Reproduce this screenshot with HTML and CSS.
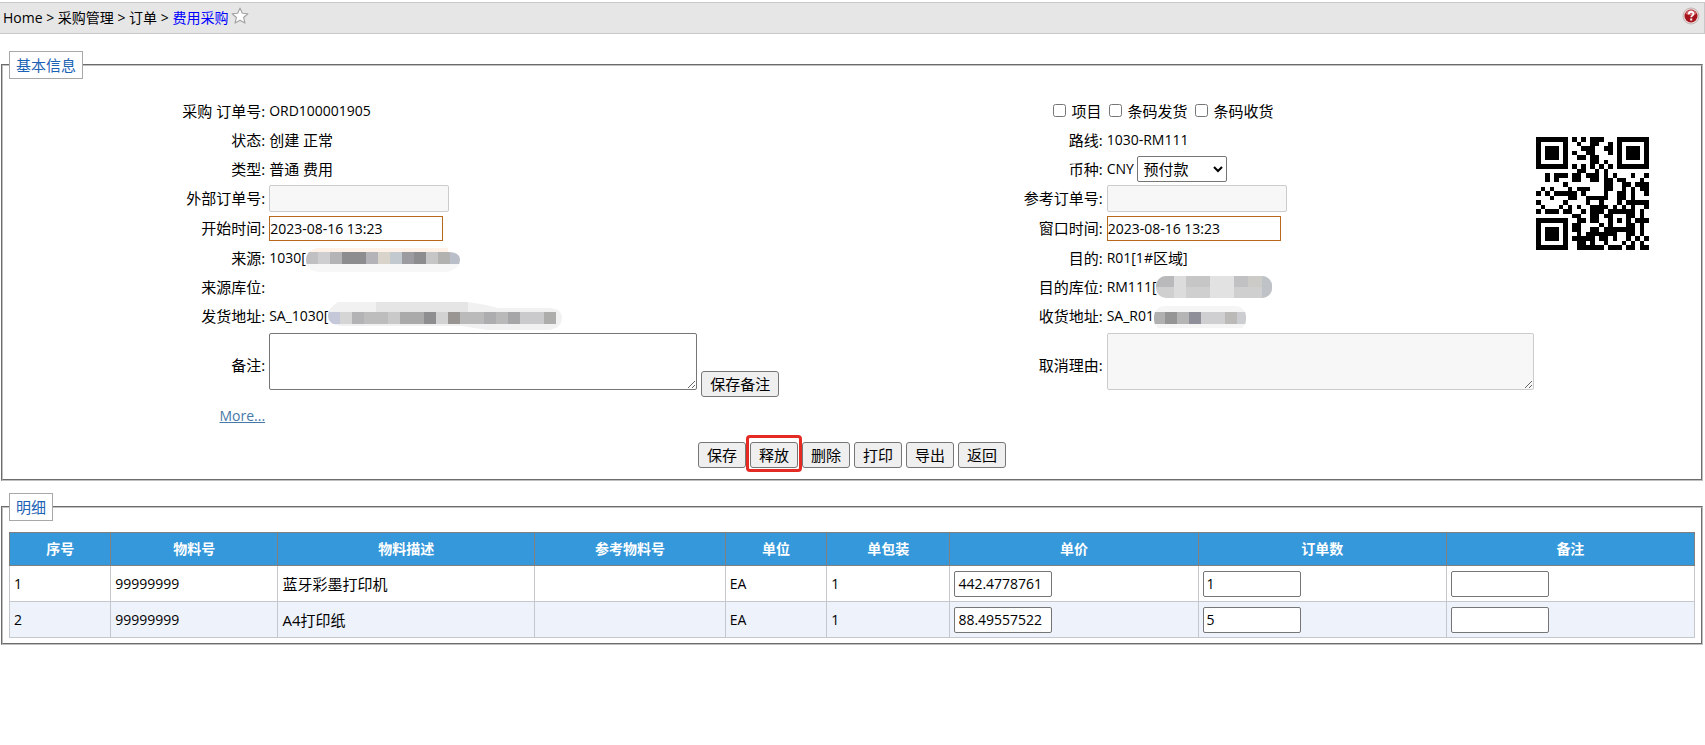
FILE: index.html
```html
<!DOCTYPE html>
<html lang="zh-CN">
<head>
<meta charset="utf-8">
<title>费用采购</title>
<link rel="stylesheet" href="styles.css">
</head>
<body>
<header class="topbar">
  <nav class="crumbs">Home &gt; 采购管理 &gt; 订单 &gt; <a class="crumb-current" href="#">费用采购</a></nav>
  <svg class="star" viewBox="0 0 16 16" aria-hidden="true"><path d="M8 1l2 4.600 5 .400-3.800 3.300 1.200 5L8 11.700 3.600 14.300l1.200-5L1 6l5-.4z" fill="#fff" stroke="#a2a2a2" stroke-linejoin="round"/></svg>
  <svg class="help" viewBox="0 0 18 18" aria-hidden="true"><circle cx="9" cy="9" r="8" fill="#e9dada" stroke="#c5b5b5"/><circle cx="9" cy="9" r="6.500" fill="#a5141c"/><path d="M3.500 7a5.800 5.800 0 0 1 11 0q-5 2.500-11 0z" fill="#d0666a"/><path d="M6.700 7.200c0-3.200 4.800-3.200 4.800-.4 0 1.800-2.300 1.800-2.300 3.500" fill="none" stroke="#fff" stroke-width="1.800"/><rect x="8.200" y="11.500" width="2" height="2" fill="#fff"/></svg>
</header>

<main>
<fieldset class="panel">
  <legend>基本信息</legend>
  <form class="form" id="order">
    <span class="label">采购 订单号:</span><div class="value">ORD100001905</div>
    <div class="checks">
      <label><input type="checkbox">项目</label>
      <label><input type="checkbox">条码发货</label>
      <label><input type="checkbox">条码收货</label>
    </div>

    <span class="label">状态:</span><div class="value cjk">创建 正常</div>
    <span class="label">路线:</span><div class="value">1030-RM111</div>

    <span class="label">类型:</span><div class="value cjk">普通 费用</div>
    <label class="label" for="pay">币种:</label><div class="value">CNY <select id="pay"><option>预付款</option></select></div>

    <label class="label" for="ext">外部订单号:</label><div class="value tall"><input class="field" id="ext" disabled></div>
    <label class="label" for="ref">参考订单号:</label><div class="value tall"><input class="field" id="ref" disabled></div>

    <label class="label" for="start">开始时间:</label><div class="value tall"><input class="date" id="start" value="2023-08-16 13:23"></div>
    <label class="label" for="window">窗口时间:</label><div class="value tall"><input class="date" id="window" value="2023-08-16 13:23"></div>

    <span class="label">来源:</span>
    <div class="value"><span>1030[</span><svg class="mask" width="154" height="28" viewBox="0 -4 154 28"><defs><clipPath id="c1"><path d="M12 0H142V4Q154 4 154 12T142 24H12Q0 22 0 12T12 0z"/></clipPath></defs><g clip-path="url(#c1)"><path d="M0 0h154v4H0z" fill="#fdf1e8"/><path d="M0 16h154v12H0z" fill="#f7f7f8"/><path d="M0 4h12v12H0z" fill="#c0c0c2"/><path d="M12 4h12v12H12z" fill="#ceced0"/><path d="M24 4h12v12H24z" fill="#b4b4b6"/><path d="M36 4h24v12H36z" fill="#8d8d90"/><path d="M60 4h12v12H60z" fill="#b4b4b8"/><path d="M72 4h12v12H72z" fill="#d8d4cb"/><path d="M84 4h12v12H84z" fill="#c3cacf"/><path d="M96 4h12v12H96z" fill="#9c9ca0"/><path d="M108 4h12v12h-12z" fill="#8d8d90"/><path d="M120 4h12v12h-12z" fill="#c6c6c6"/><path d="M132 4h12v12h-12z" fill="#b2b2b0"/><path d="M144 4h10v12h-10z" fill="#b9bec8"/></g></svg></div>
    <span class="label">目的:</span><div class="value">R01[1#<span class="cjk">区域</span>]</div>

    <span class="label">来源库位:</span><div class="value"></div>
    <span class="label">目的库位:</span>
    <div class="value"><span>RM111[</span><svg class="mask" width="116" height="24" viewBox="0 0 116 24"><defs><clipPath id="c2"><rect y="1" width="116" height="22" rx="10"/></clipPath></defs><g clip-path="url(#c2)"><path d="M0 0h116v24H0z" fill="#cfcfcf"/><path d="M0 0h18v12H0z" fill="#b9b9bb"/><path d="M18 0h12v24H18z" fill="#dcdcdc"/><path d="M30 0h24v12H30z" fill="#c6c6c6"/><path d="M54 0h24v24H54z" fill="#e2e2e2"/><path d="M78 0h14v12H78z" fill="#c1c1c3"/><path d="M92 0h14v12H92z" fill="#cdcbc8"/><path d="M106 0h10v24h-10z" fill="#bfc2c7"/></g></svg></div>

    <span class="label">发货地址:</span>
    <div class="value"><span>SA_1030[</span><svg class="mask" width="234" height="28" viewBox="0 0 234 28"><defs><clipPath id="c3"><path d="M10 0H140Q155 2 170 6H220Q234 6 234 16T220 28H160Q145 26 135 24H12Q0 22 0 14T10 0z"/></clipPath></defs><g clip-path="url(#c3)"><path d="M0 0h234v28H0z" fill="#f1f1f2"/><path d="M48 0h92v10H48z" fill="#e5e5e6"/><path d="M0 10h12v12H0z" fill="#c5c8d8"/><path d="M12 10h12v12H12z" fill="#d5d5d5"/><path d="M24 10h12v12H24z" fill="#b3b3b5"/><path d="M36 10h24v12H36z" fill="#bdbdbd"/><path d="M60 10h12v12H60z" fill="#c9c9c9"/><path d="M72 10h24v12H72z" fill="#aaa"/><path d="M96 10h12v12H96z" fill="#8e8e90"/><path d="M108 10h12v12h-12z" fill="#d2d2d2"/><path d="M120 10h12v12h-12z" fill="#999592"/><path d="M132 10h24v12h-24z" fill="#bababa"/><path d="M156 10h12v12h-12z" fill="#adadaf"/><path d="M168 10h12v12h-12z" fill="#b9b9b9"/><path d="M180 10h12v12h-12z" fill="#a6a6a8"/><path d="M192 10h24v12h-24z" fill="#cacacc"/><path d="M216 10h12v12h-12z" fill="#adadab"/></g></svg></div>
    <span class="label">收货地址:</span>
    <div class="value"><span>SA_R01</span><svg class="mask" width="92" height="24" viewBox="0 -2 92 24"><defs><clipPath id="c4"><rect width="92" height="24" rx="10"/></clipPath></defs><g clip-path="url(#c4)"><path d="M0 0h92v24H0z" fill="#f5f5f6"/><path d="M0 6h11v12H0z" fill="#b0b0b0"/><path d="M11 6h12v12H11z" fill="#959595"/><path d="M23 6h12v12H23z" fill="#b5b5b5"/><path d="M35 6h12v12H35z" fill="#8f8f99"/><path d="M47 6h24v12H47z" fill="#cfcfd2"/><path d="M71 6h12v12H71z" fill="#bcbab8"/><path d="M83 6h9v12h-9z" fill="#cbcdd0"/></g></svg></div>

    <label class="label" for="note">备注:</label><div class="value memo"><textarea id="note"></textarea><button class="btn" type="button">保存备注</button></div>
    <label class="label" for="reason">取消理由:</label><div class="value memo"><textarea id="reason" disabled></textarea></div>

    <span class="label more-row"><a class="more" href="#">More...</a></span>

    <svg class="qr" id="qr" viewBox="0 0 25 25" shape-rendering="crispEdges" role="img" aria-label="ORD100001905"></svg>
  </form>
  <div class="actions">
    <button class="btn" type="button">保存</button>
    <span class="marked"><button class="btn" type="button">释放</button></span>
    <button class="btn" type="button">删除</button>
    <button class="btn" type="button">打印</button>
    <button class="btn" type="button">导出</button>
    <button class="btn" type="button">返回</button>
  </div>
</fieldset>

<fieldset class="panel detail">
  <legend>明细</legend>
  <table class="items">
    <colgroup><col class="w-no"><col class="w-code"><col class="w-desc"><col class="w-ref"><col class="w-unit"><col class="w-pack"><col class="w-num"><col class="w-num"><col class="w-num"></colgroup>
    <thead><tr><th>序号</th><th>物料号</th><th>物料描述</th><th>参考物料号</th><th>单位</th><th>单包装</th><th>单价</th><th>订单数</th><th>备注</th></tr></thead>
    <tbody>
      <tr><td>1</td><td>99999999</td><td class="cjk">蓝牙彩墨打印机</td><td></td><td>EA</td><td>1</td><td><input aria-label="单价" value="442.4778761"></td><td><input aria-label="订单数" value="1"></td><td><input aria-label="备注"></td></tr>
      <tr><td>2</td><td>99999999</td><td class="cjk">A4打印纸</td><td></td><td>EA</td><td>1</td><td><input aria-label="单价" value="88.49557522"></td><td><input aria-label="订单数" value="5"></td><td><input aria-label="备注"></td></tr>
    </tbody>
  </table>
</fieldset>
</main>
<script src="qr.js"></script>
</body>
</html>
```
FILE: styles.css
```css
* { box-sizing: border-box; }
body {
  margin: 0;
  padding-top: 2px;
  background: #fff;
  color: #000;
  font: 14px/20px "Open Sans", "Noto Sans CJK SC", sans-serif;
}
input, select, textarea, button { font: inherit; color: inherit; margin: 0; }

.topbar {
  display: flex;
  align-items: center;
  height: 32px;
  padding: 0 4px 0 3px;
  background: #e6e6e6;
  border: 1px solid #c8c8c8;
  border-left: 0;
}
.crumb-current { color: #00f; text-decoration: none; }
.star { width: 18px; height: 18px; margin: 0 0 4px 3px; }
.help { width: 18px; height: 18px; margin: 0 0 4px auto; }

.panel {
  margin: 17px 2px 0 1px;
  padding: 17px 6px 9px 6px;
  border: 2px groove #c0c0c0;
  min-width: 0;
}
.panel legend {
  padding: 3px 6px;
  border: 1px solid #a8a8a8;
  color: #1b62b5;
  font-size: 15px;
  line-height: 20px;
}

.form {
  display: grid;
  grid-template-columns:
    minmax(0, 260fr) minmax(0, 578fr) minmax(0, 259fr) minmax(0, 427fr) minmax(0, 161fr);
  grid-auto-rows: minmax(29px, auto);
  align-items: center;
}
.label {
  padding-right: 4px;
  text-align: right;
  font-size: 15px;
}
.value { display: flex; align-items: center; min-height: 29px; white-space: pre; }
.tall { min-height: 30px; }
.cjk { font-size: 15px; }
.mask { display: block; flex: none; }
.checks {
  grid-column: span 2;
  display: flex;
  gap: 8px;
  padding-left: 30%;
  font-size: 15px;
}
.checks label { display: flex; align-items: center; gap: 5px; }
.checks input { width: 13px; height: 13px; }
.qr {
  grid-column: 5;
  grid-row: 1 / span 9;
  align-self: start;
  width: 113px;
  height: 113px;
  margin: 41px 0 0 2px;
}

select {
  width: 90px;
  height: 26px;
  padding: 0 0 0 1px;
  font-size: 15px;
  background: #fff;
  border: 1px solid #767676;
  border-radius: 2px;
}
.field {
  width: 180px;
  height: 27px;
  background: #f7f7f7;
  border: 1px solid #ccc;
  border-radius: 2px;
}
.date {
  width: 174px;
  height: 25px;
  padding: 0;
  background: #fff;
  border: 1px solid #b8691c;
}
textarea {
  display: block;
  width: 428px;
  height: 57px;
  background: #fff;
  border: 1px solid #767676;
  border-radius: 2px;
}
textarea:disabled { background: #f7f7f7; border-color: #ccc; }
.memo { align-items: flex-end; gap: 4px; padding: 3px 0; min-height: 70px; }
.memo textarea { margin-bottom: 7px; }
.more-row { font-size: 14px; line-height: 32px; }
.more { color: #4678a8; }

.btn {
  height: 26px;
  padding: 0 8px;
  background: #efefef;
  border: 1px solid #767676;
  border-radius: 3px;
  font-size: 15px;
}
.actions { display: flex; justify-content: center; gap: 4px; padding: 10px 0 2px; }
.marked { position: relative; display: flex; }
.marked::after {
  content: "";
  position: absolute;
  inset: -7px -4px -4px;
  border: 3px solid #e32b24;
  border-radius: 4px;
  pointer-events: none;
}

.detail { margin-top: 12px; padding: 11px 6px 5px; }
.items { width: 100%; border-collapse: collapse; table-layout: fixed; }
.w-no, .w-unit { width: 6%; }
.w-code { width: 9.9%; }
.w-desc { width: 15.2%; }
.w-ref { width: 11.3%; }
.w-pack { width: 7.3%; }
.w-num { width: 14.7%; }
.items th {
  height: 33px;
  padding: 0;
  background: #3498db;
  border: 1px solid #808080;
  color: #fff;
  font-weight: bold;
}
.items td { height: 36px; padding: 0 4px; border: 1px solid #c4c8ce; }
.items tbody tr:nth-child(2) { background: #edf2fb; }
.items input {
  display: block;
  width: 98px;
  height: 26px;
  padding: 0 3px;
  background: #fff;
  border: 1px solid #767676;
  border-radius: 2px;
}
```
FILE: qr.js
```js
// Version 2 QR symbol, byte mode, level H.
(function () {
  var N = 25, DATA = 16, ECC = 28, MASK = 0, LEVEL = 2;
  var svg = document.getElementById("qr");
  var text = svg.getAttribute("aria-label");
  var bits = [], i, j;
  function put(v, k) { for (var b = k - 1; b >= 0; b--) bits.push(v >> b & 1); }
  put(4, 4);
  put(text.length, 8);
  for (i = 0; i < text.length; i++) put(text.charCodeAt(i), 8);
  put(0, 4);
  var words = [];
  for (i = 0; i < bits.length; i += 8) words.push(parseInt(bits.slice(i, i + 8).join(""), 2));
  for (i = 0; words.length < DATA; i++) words.push(i % 2 ? 17 : 236);

  var ex = [], lg = [], x = 1;
  for (i = 0; i < 255; i++) { ex[i] = x; lg[x] = i; x <<= 1; if (x > 255) x ^= 285; }
  function mul(a, b) { return a && b ? ex[(lg[a] + lg[b]) % 255] : 0; }
  var gen = [1];
  for (i = 0; i < ECC; i++) {
    var next = gen.concat([0]);
    for (j = 0; j < gen.length; j++) next[j + 1] ^= mul(gen[j], ex[i]);
    gen = next;
  }
  var rest = words.concat(Array(ECC).fill(0));
  for (i = 0; i < DATA; i++) {
    var f = rest[i];
    for (j = 0; j < gen.length; j++) rest[i + j] ^= mul(gen[j], f);
  }
  words = words.concat(rest.slice(DATA));

  var m = [], fixed = [];
  for (i = 0; i < N; i++) { m.push(Array(N).fill(0)); fixed.push(Array(N).fill(0)); }
  function set(x, y, v) {
    if (x >= 0 && y >= 0 && x < N && y < N) { m[y][x] = v ? 1 : 0; fixed[y][x] = 1; }
  }
  for (i = 0; i < N; i++) { set(6, i, i % 2 === 0); set(i, 6, i % 2 === 0); }
  function square(cx, cy, r, light) {
    for (var a = -r; a <= r; a++) for (var b = -r; b <= r; b++)
      set(cx + a, cy + b, light.indexOf(Math.max(Math.abs(a), Math.abs(b))) < 0);
  }
  square(3, 3, 4, [2, 4]);
  square(N - 4, 3, 4, [2, 4]);
  square(3, N - 4, 4, [2, 4]);
  square(18, 18, 2, [1]);

  var d = LEVEL << 3 | MASK, rem = d;
  for (i = 0; i < 10; i++) rem = rem << 1 ^ (rem >> 9) * 0x537;
  var fmt = (d << 10 | rem) ^ 0x5412;
  function g(k) { return fmt >> k & 1; }
  for (i = 0; i <= 5; i++) set(8, i, g(i));
  set(8, 7, g(6)); set(8, 8, g(7)); set(7, 8, g(8));
  for (i = 9; i < 15; i++) set(14 - i, 8, g(i));
  for (i = 0; i < 8; i++) set(N - 1 - i, 8, g(i));
  for (i = 8; i < 15; i++) set(8, N - 15 + i, g(i));
  set(8, N - 8, 1);

  var k = 0;
  for (var right = N - 1; right >= 1; right -= 2) {
    if (right === 6) right = 5;
    for (var v = 0; v < N; v++) for (j = 0; j < 2; j++) {
      var X = right - j, Y = (right + 1 & 2) === 0 ? N - 1 - v : v;
      if (fixed[Y][X]) continue;
      var bit = k < words.length * 8 ? words[k >> 3] >> (7 - (k & 7)) & 1 : 0;
      k++;
      m[Y][X] = bit ^ ((X + Y) % 2 === 0 ? 1 : 0);
    }
  }
  var path = "";
  m.forEach(function (row, y) { row.forEach(function (c, x) { if (c) path += "M" + x + " " + y + "h1v1h-1z"; }); });
  var el = document.createElementNS("http://www.w3.org/2000/svg", "path");
  el.setAttribute("d", path);
  svg.appendChild(el);
})();
```
